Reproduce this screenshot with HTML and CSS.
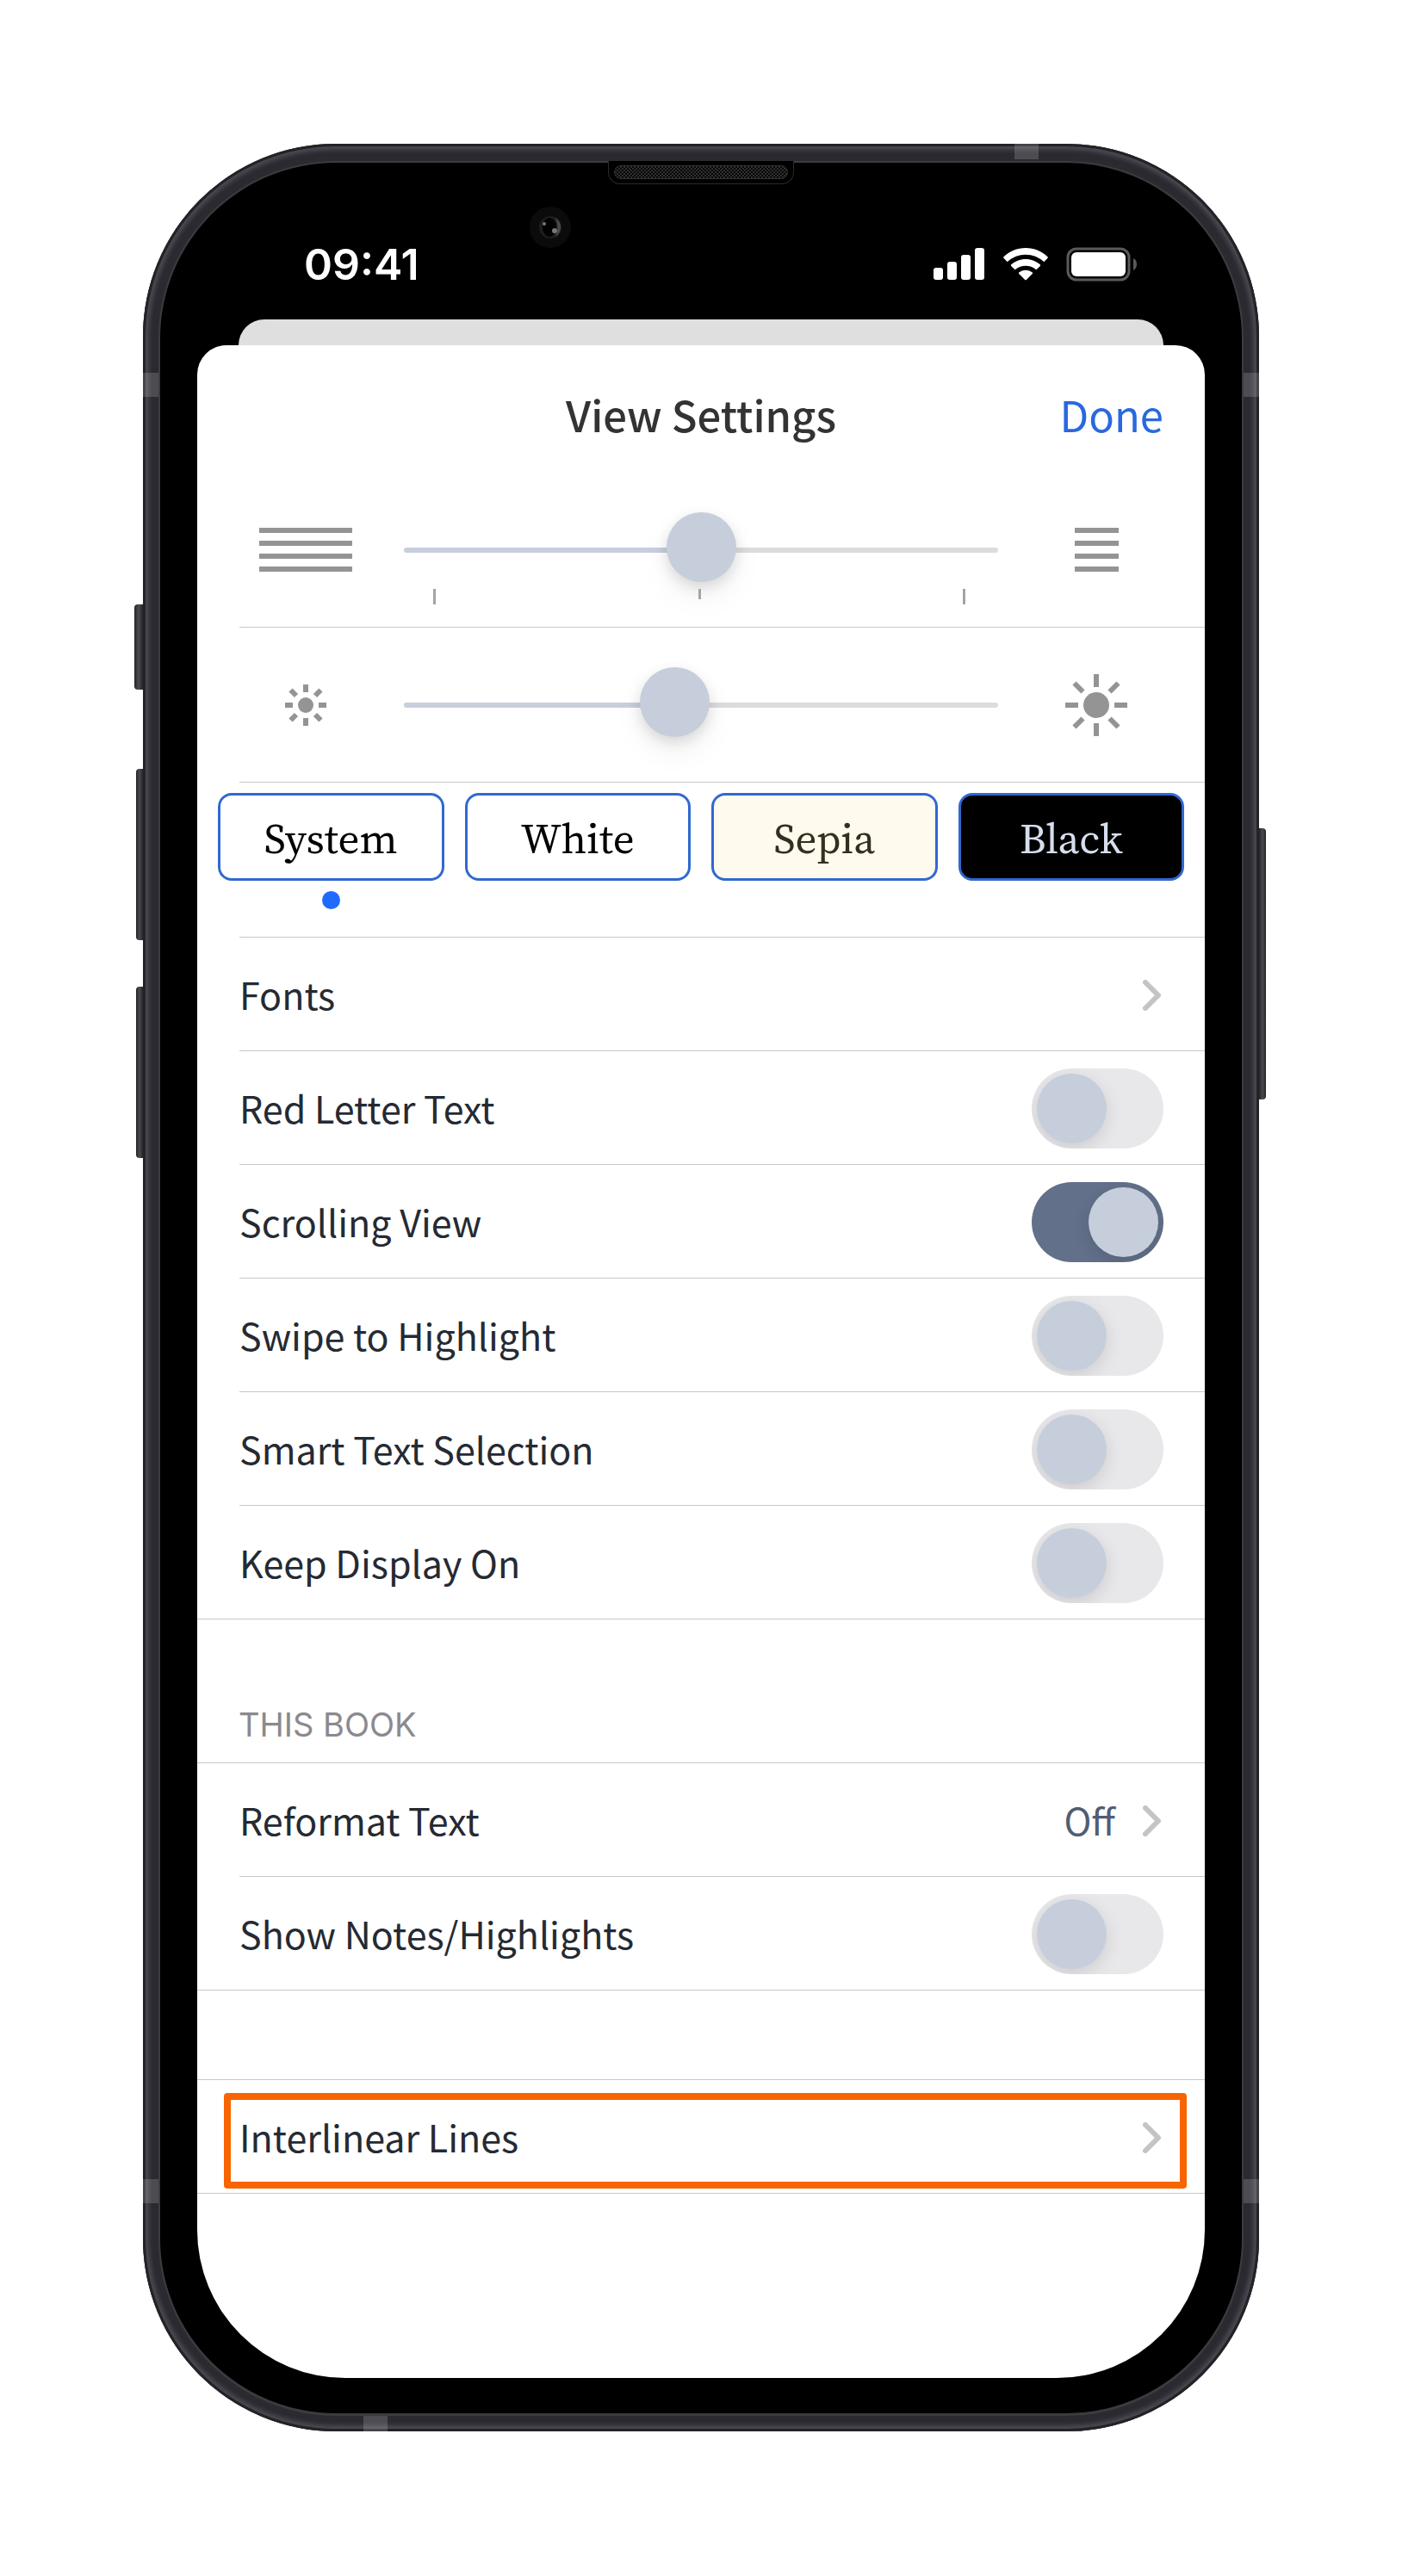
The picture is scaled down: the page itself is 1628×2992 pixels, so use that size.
FILE: index.html
```html
<!DOCTYPE html>
<html lang="en">
<head>
<meta charset="utf-8">
<meta name="viewport" content="width=device-width, initial-scale=1">
<title>View Settings</title>
<link rel="stylesheet" href="styles.css">
</head>
<body>
<svg class="sprite" aria-hidden="true">
  <symbol id="chevron" viewBox="0 0 22 36">
    <path d="M3 3 L18 18 L3 33" fill="none" stroke="#c4c4c7" stroke-width="6" stroke-linecap="round" stroke-linejoin="round"/>
  </symbol>
</svg>
<main class="stage">
  <div class="phone">
    <span class="key key-mute"></span>
    <span class="key key-up"></span>
    <span class="key key-down"></span>
    <span class="key key-power"></span>
    <span class="band band-top"></span>
    <span class="band band-bottom"></span>
    <span class="band band-left-upper"></span>
    <span class="band band-left-lower"></span>
    <span class="band band-right-upper"></span>
    <span class="band band-right-lower"></span>

    <div class="bezel">
      <span class="speaker"><span class="grille"></span></span>
      <svg class="camera" viewBox="0 0 50 50" aria-hidden="true">
        <circle cx="25" cy="25" r="24" fill="#0b0b0b"/>
        <circle cx="25" cy="25" r="13" fill="#1d1d1d"/>
        <path d="M31 14 A13 13 0 0 1 31 36 Q36 25 31 14" fill="#4a4a4a"/>
        <ellipse cx="24" cy="25" rx="8" ry="11" fill="#020202"/>
        <circle cx="18" cy="21" r="2" fill="#777"/>
        <circle cx="30" cy="29" r="3" fill="#777"/>
      </svg>

      <div class="status">
        <span class="time">09:41</span>
        <div class="status-icons">
          <svg width="60" height="38" viewBox="0 0 60 38" fill="#fff" aria-hidden="true">
            <rect x="0" y="23" width="11" height="14" rx="3"/>
            <rect x="16" y="16" width="11" height="21" rx="3"/>
            <rect x="32" y="8" width="11" height="29" rx="3"/>
            <rect x="48" y="0" width="11" height="37" rx="3"/>
          </svg>
          <svg width="52" height="38" viewBox="0 0 52 38" fill="#fff" aria-hidden="true">
            <path d="M26 0 C36 0 45 4 51.500 10.200 Q52.300 11 51.500 11.800 L48 15.500 Q47.300 16.300 46.500 15.500 C41 10.500 34 7.700 26 7.700 C18 7.700 11 10.500 5.500 15.500 Q4.700 16.300 4 15.500 L.5 11.800 Q-.3 11 .5 10.200 C7 4 16 0 26 0Z"/>
            <path d="M26 13 C32.500 13 38.500 15.500 42.800 19.300 Q43.600 20.100 42.800 20.900 L39 24.700 Q38.300 25.400 37.500 24.700 C34.500 22.200 30.500 20.700 26 20.700 C21.500 20.700 17.500 22.200 14.500 24.700 Q13.700 25.400 13 24.700 L9.200 20.900 Q8.400 20.100 9.200 19.300 C13.500 15.500 19.500 13 26 13Z"/>
            <path d="M26 25.800 C29 25.800 31.800 26.900 33.800 28.600 Q34.600 29.300 33.800 30.100 L26.800 37 Q26 37.700 25.200 37 L18.200 30.100 Q17.400 29.300 18.200 28.600 C20.200 26.900 23 25.800 26 25.800Z"/>
          </svg>
          <svg class="battery" width="83" height="40" viewBox="0 0 83 40" aria-hidden="true">
            <rect x="2" y="2" width="71" height="36" rx="10" fill="none" stroke="#5a5a5a" stroke-width="3"/>
            <rect x="6" y="6" width="63" height="28" rx="6" fill="#fff"/>
            <path d="M78 13 Q82 15 82 20 Q82 25 78 27Z" fill="#5a5a5a"/>
          </svg>
        </div>
      </div>

      <div class="sheet-behind"></div>
      <section class="sheet">
        <header class="sheet-header">
          <h1>View Settings</h1>
          <button class="done" type="button">Done</button>
        </header>

        <div class="slider-row">
          <svg class="slider-icon" width="108" height="51" viewBox="0 0 108 51" fill="#949494" aria-hidden="true">
            <path d="M0 0h108v6H0zM0 15h108v6H0zM0 30h108v6H0zM0 45h108v6H0z"/>
          </svg>
          <div class="slider-control">
            <input type="range" min="0" max="100" value="50" aria-label="Text width" style="--fill:50%">
            <div class="ticks"><span></span><span class="tick-mid"></span><span></span></div>
          </div>
          <svg class="slider-icon" width="51" height="51" viewBox="0 0 51 51" fill="#949494" aria-hidden="true">
            <path d="M0 0h51v6H0zM0 15h51v6H0zM0 30h51v6H0zM0 45h51v6H0z"/>
          </svg>
        </div>

        <div class="slider-row">
          <svg class="slider-icon" width="48" height="48" viewBox="-24 -24 48 48" stroke="#949494" stroke-width="6" aria-hidden="true">
            <circle r="9" fill="#949494" stroke="none"/>
            <path d="M0-24V-15M0 24V15M-24 0H-15M24 0H15M-17.500-17.500L-11-11M17.500-17.500L11-11M-17.500 17.500L-11 11M17.500 17.500L11 11"/>
          </svg>
          <div class="slider-control">
            <input type="range" min="0" max="100" value="45" aria-label="Brightness" style="--fill:45%">
          </div>
          <svg class="slider-icon" width="72" height="72" viewBox="-36 -36 72 72" stroke="#949494" stroke-width="6" aria-hidden="true">
            <circle r="15" fill="#949494" stroke="none"/>
            <path d="M0-36V-21M0 36V21M-36 0H-21M36 0H21M-25.500-25.500L-15.500-15.500M25.500-25.500L15.500-15.500M-25.500 25.500L-15.500 15.500M25.500 25.500L15.500 15.500"/>
          </svg>
        </div>

        <div class="themes">
          <label class="theme"><span class="swatch">System</span><input type="radio" name="theme" checked></label>
          <label class="theme"><span class="swatch">White</span><input type="radio" name="theme"></label>
          <label class="theme"><span class="swatch swatch-sepia">Sepia</span><input type="radio" name="theme"></label>
          <label class="theme"><span class="swatch swatch-black">Black</span><input type="radio" name="theme"></label>
        </div>

        <div class="group group-main">
          <a class="row" href="#fonts"><span>Fonts</span><svg class="chevron" aria-hidden="true"><use href="#chevron"/></svg></a>
          <label class="row"><span>Red Letter Text</span><input class="toggle" type="checkbox"></label>
          <label class="row"><span>Scrolling View</span><input class="toggle" type="checkbox" checked></label>
          <label class="row"><span>Swipe to Highlight</span><input class="toggle" type="checkbox"></label>
          <label class="row"><span>Smart Text Selection</span><input class="toggle" type="checkbox"></label>
          <label class="row"><span>Keep Display On</span><input class="toggle" type="checkbox"></label>
        </div>

        <h2 class="group-title">THIS BOOK</h2>
        <div class="group">
          <a class="row" href="#reformat"><span>Reformat Text</span><span class="value">Off</span><svg class="chevron" aria-hidden="true"><use href="#chevron"/></svg></a>
          <label class="row"><span>Show Notes/Highlights</span><input class="toggle" type="checkbox"></label>
        </div>

        <div class="group group-last">
          <a class="row row-marked" href="#interlinear"><span>Interlinear Lines</span><svg class="chevron" aria-hidden="true"><use href="#chevron"/></svg></a>
        </div>
      </section>
    </div>
  </div>
</main>
</body>
</html>
```
FILE: styles.css
```css
* { box-sizing: border-box; }

body {
  margin: 0;
  background: #fff;
  color: #252a33;
  font-family: "Noto Sans CJK SC", "Noto Sans", sans-serif;
  font-size: 43px;
  line-height: 64px;
}

h1, h2 { margin: 0; }
a { color: inherit; text-decoration: none; }
.sprite { position: absolute; width: 0; height: 0; }

.stage { padding: 167px 166px 168px; }

/* Phone body */
.phone {
  position: relative;
  padding: 20px 18px 18px;
  border-radius: 224px;
  background: #2b2a31;
  box-shadow: inset 0 0 0 3px #232327, inset 0 0 5px 7px #4b4a52;
}

.key {
  position: absolute;
  left: -8px;
  width: 8px;
  height: 199px;
  background: linear-gradient(90deg, #232327, #4c4b52 50%, #232327);
  border-radius: 4px 0 0 4px;
}
.key-mute { left: -10px; top: 535px; width: 10px; height: 99px; }
.key-up { top: 726px; }
.key-down { top: 979px; }
.key-power {
  left: auto;
  right: -8px;
  top: 795px;
  height: 315px;
  border-radius: 0 4px 4px 0;
}

.band { position: absolute; width: 18px; height: 28px; background: rgba(255, 255, 255, .16); }
.band-top, .band-bottom { width: 28px; height: 18px; }
.band-top { top: 0; right: 256px; }
.band-bottom { bottom: 0; left: 256px; }
.band-left-upper { left: 0; top: 266px; }
.band-right-upper { right: 0; top: 266px; }
.band-left-lower { left: 0; bottom: 265px; }
.band-right-lower { right: 0; bottom: 265px; }

.bezel {
  position: relative;
  padding: 0 43px 41px;
  border: 2px solid #3c3c3f;
  border-bottom-width: 3px;
  border-radius: 206px;
  background: #000;
}

.speaker {
  position: absolute;
  top: -2px;
  left: 50%;
  width: 216px;
  height: 27px;
  margin-left: -108px;
  padding: 5px 6px;
  border: 1px solid #2a2a2a;
  border-top: 0;
  border-radius: 0 0 14px 14px;
  background: #000;
}
.grille {
  display: block;
  height: 16px;
  border: 1px solid #333;
  border-radius: 8px;
  background: repeating-conic-gradient(#303030 0 25%, #060606 0 50%) 0 0 / 4px 4px;
}
.camera { position: absolute; top: 50px; left: 428px; width: 50px; height: 50px; }

/* Status bar */
.status {
  display: flex;
  align-items: center;
  justify-content: space-between;
  height: 182px;
  padding: 86px 78px 32px 124px;
}
.time { color: #fff; font: 600 50px/64px Inter, sans-serif; }
.status-icons { display: flex; align-items: center; gap: 21px; }

/* Sheet */
.sheet-behind {
  height: 30px;
  margin: 0 48px;
  border-radius: 30px 30px 0 0;
  background: #dfdfdf;
}
.sheet {
  padding-bottom: 214px;
  border-radius: 34px 34px 172px 172px;
  background: #fff;
}

.sheet-header {
  display: grid;
  grid-template-columns: 1fr auto 1fr;
  align-items: center;
  height: 148px;
  padding: 12px 48px 0;
  font-size: 49px;
}
.sheet-header h1 {
  grid-column: 2;
  color: #333;
  font-size: inherit;
  font-weight: 500;
}
.done {
  justify-self: end;
  padding: 0;
  border: 0;
  background: none;
  color: #2a68de;
  font: inherit;
}

.slider-row {
  display: grid;
  grid-template-columns: 154px 1fr 154px;
  column-gap: 37px;
  height: 180px;
  margin-left: 49px;
  padding-right: 49px;
  border-bottom: 1px solid #c8c7cc;
}
.slider-icon { place-self: center; }
.slider-control { padding-top: 45px; }
.slider-control input {
  display: block;
  width: 100%;
  height: 90px;
  margin: 0;
  appearance: none;
  background: none;
}
.slider-control input::-webkit-slider-runnable-track {
  height: 6px;
  border-radius: 3px;
  background: linear-gradient(90deg, #c7cedc var(--fill), #dcdcdc var(--fill));
}
.slider-control input::-webkit-slider-thumb {
  appearance: none;
  width: 81px;
  height: 81px;
  margin-top: -41px;
  border-radius: 50%;
  background: #c6cedc;
  box-shadow: 0 6px 16px rgba(0, 0, 0, .12), 0 16px 36px rgba(0, 0, 0, .06);
}
.ticks {
  display: flex;
  justify-content: space-between;
  padding: 0 38px 0 34px;
}
.ticks span { width: 3px; height: 18px; background: #a4a4a4; }
.ticks .tick-mid { height: 12px; }

/* Themes */
.themes {
  display: grid;
  grid-template-columns: repeat(4, 1fr);
  column-gap: 24px;
  height: 179px;
  padding: 12px 24px 0;
}
.theme { display: flex; flex-direction: column; align-items: center; gap: 12px; }
.swatch {
  align-self: stretch;
  height: 102px;
  padding-top: 18px;
  border: 3px solid #3069cf;
  border-radius: 16px;
  color: #000;
  font-family: "Source Serif 4", "Source Serif Pro", "Liberation Serif", serif;
  font-size: 49px;
  text-align: center;
}
.swatch-sepia { background: #fffaee; color: #33301f; }
.swatch-black { background: #000; color: #d6deee; }
.theme input {
  width: 21px;
  height: 21px;
  margin: 0;
  appearance: none;
  border-radius: 50%;
}
.theme input:checked { background: #1f6bff; }

/* Setting groups */
.group { border: solid #c8c7cc; border-width: 1px 0; }
.group-main { border-top: 0; }
.group-last { margin-top: 103px; }
.group-title {
  height: 166px;
  padding: 90px 48px 0;
  color: #8a8a8e;
  font: 400 38px/64px Inter, sans-serif;
}
.row {
  position: relative;
  display: flex;
  align-items: center;
  height: 131px;
  margin-left: 49px;
  padding: 2px 48px 0 0;
}
.row + .row, .group-main .row { height: 132px; border-top: 1px solid #c8c7cc; }
.row > span { padding-bottom: 4px; }
.row > :first-child { margin-right: auto; }
.value { margin-right: 32px; color: #525d73; }
.chevron { width: 22px; height: 36px; margin-right: 2px; }

.toggle {
  width: 153px;
  height: 93px;
  margin: 0;
  padding: 6px;
  appearance: none;
  border-radius: 47px;
  background: #e8e8ea;
  overflow: hidden;
}
.toggle::before {
  content: "";
  display: block;
  width: 81px;
  height: 81px;
  border-radius: 50%;
  background: #c6cedc;
  box-shadow: 0 6px 20px rgba(0, 0, 0, .12);
}
.toggle:checked { background: #62708a; }
.toggle:checked::before { margin-left: auto; }

.row-marked::after {
  content: "";
  position: absolute;
  inset: 15px 21px 5px -18px;
  border: 8px solid #f86400;
  border-radius: 4px;
}
```
